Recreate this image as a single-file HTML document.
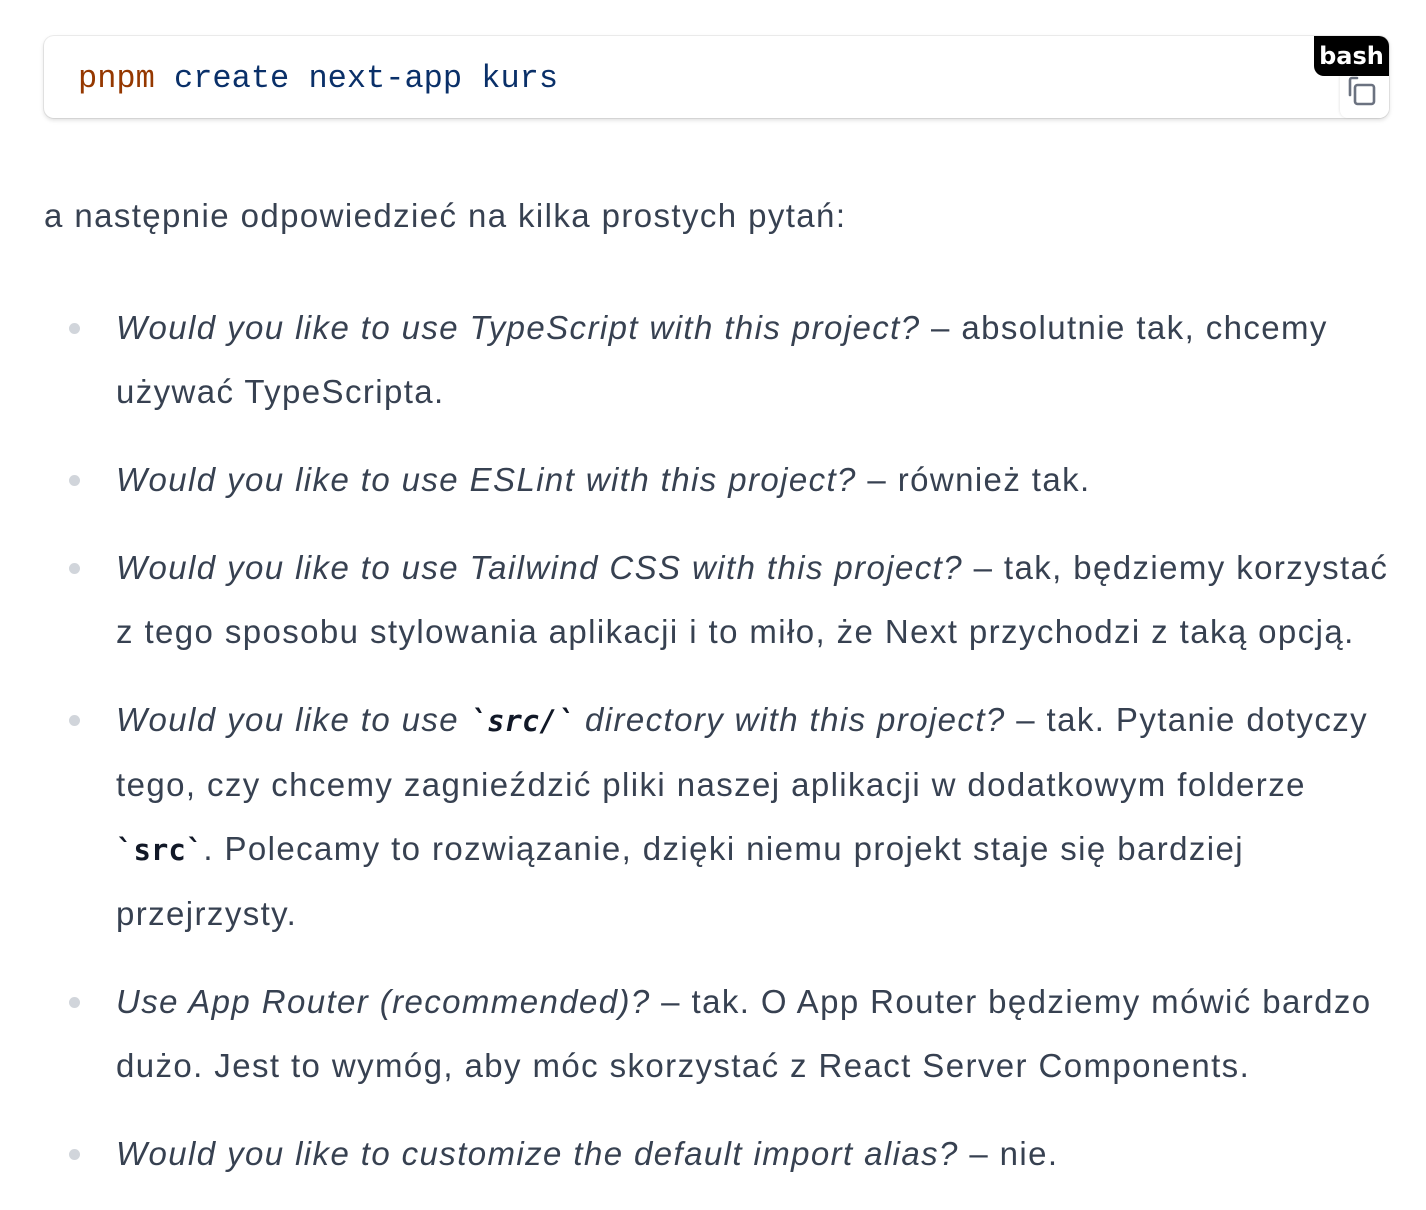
<!DOCTYPE html>
<html><head><meta charset="utf-8"><style>
html,body{margin:0;padding:0;background:#fff;width:1426px;height:1202px;overflow:hidden}
body{font-family:"Liberation Sans",sans-serif;color:#374151;font-size:33px;letter-spacing:1.4px}
.code{position:absolute;left:44px;top:36px;width:1345px;height:82px;border-radius:10px;background:#fff;box-shadow:0 2px 5px rgba(0,0,0,.15),0 0 0 1px #efefef;letter-spacing:0}
.code pre{margin:0;position:absolute;left:34px;top:23px;font-family:"Liberation Mono",monospace;font-size:32px;line-height:40px;color:#0a3069}
.code .k{color:#953800}
.bash{position:absolute;right:0;top:0;width:75px;height:40px;background:#000;color:#fff;font-weight:bold;font-size:24px;line-height:40px;text-align:center;border-radius:0 10px 0 10px;font-family:"DejaVu Sans","Liberation Sans",sans-serif}
.copy{position:absolute;right:0;top:40px;width:49px;height:42px;background:#fff;border-radius:0 0 10px 8px;box-shadow:-1px 0 2px rgba(0,0,0,.08)}
p{position:absolute;left:44px;top:184px;margin:0;line-height:64px;white-space:nowrap}
ul{position:absolute;left:0;top:296px;margin:0;padding:0;list-style:none}
li{position:relative;padding-left:116px;line-height:64px;margin-bottom:24px;white-space:nowrap}
li:before{content:"";position:absolute;left:69px;top:27px;width:11px;height:11px;border-radius:50%;background:#d1d5db}
em{font-style:italic}
code{font-family:"DejaVu Sans Mono","Liberation Mono",monospace;font-weight:bold;color:#111827;font-size:29px;letter-spacing:0}
</style></head><body>
<div class="code"><pre><span class="k">pnpm</span> create next-app kurs</pre>
<div class="bash">bash</div>
<div class="copy"><svg width="49" height="42" viewBox="0 0 49 42"><path d="M10 19 V4 a2 2 0 0 1 2-2 H17" fill="none" stroke="#6b7280" stroke-width="2.6" stroke-linecap="round"/><rect x="15" y="9" width="19" height="19" rx="2.5" fill="none" stroke="#6b7280" stroke-width="2.6"/></svg></div>
</div>
<p>a następnie odpowiedzieć na kilka prostych pytań:</p>
<ul>
<li><em>Would you like to use TypeScript with this project?</em> – absolutnie tak, chcemy<br>używać TypeScripta.</li>
<li><em>Would you like to use ESLint with this project?</em> – również tak.</li>
<li><em>Would you like to use Tailwind CSS with this project?</em> – tak, będziemy korzystać<br>z tego sposobu stylowania aplikacji i to miło, że Next przychodzi z taką opcją.</li>
<li><em>Would you like to use <code>`src/`</code> directory with this project?</em> – tak. Pytanie dotyczy<br>tego, czy chcemy zagnieździć pliki naszej aplikacji w dodatkowym folderze<br><code>`src`</code>. Polecamy to rozwiązanie, dzięki niemu projekt staje się bardziej<br>przejrzysty.</li>
<li><em>Use App Router (recommended)?</em> – tak. O App Router będziemy mówić bardzo<br>dużo. Jest to wymóg, aby móc skorzystać z React Server Components.</li>
<li><em>Would you like to customize the default import alias?</em> – nie.</li>
</ul>
</body></html>
